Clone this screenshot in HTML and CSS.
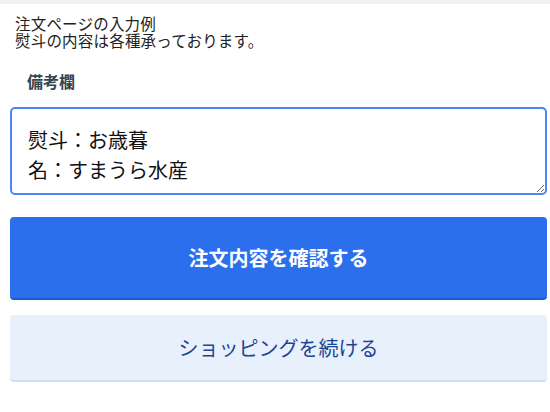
FILE: index.html
```html
<!DOCTYPE html>
<html lang="ja">
<head>
  <meta charset="UTF-8">
  <meta name="viewport" content="width=device-width, initial-scale=1.0">
  <title>備考欄</title>
  <link rel="stylesheet" href="styles.css">
</head>
<body>
  <div class="topbar"></div>

  <div class="content">
    <!-- Note above the form -->
    <div class="note">
      <p>注文ページの入力例</p>
      <p>熨斗の内容は各種承っております。</p>
    </div>

    <!-- Remarks field -->
    <label class="field-label" for="remarks">備考欄</label>
    <textarea class="remarks" id="remarks">熨斗：お歳暮
名：すまうら水産</textarea>

    <!-- Actions -->
    <button class="btn btn-primary">注文内容を確認する</button>
    <button class="btn btn-secondary">ショッピングを続ける</button>
  </div>
</body>
</html>
```

FILE: styles.css
```css
body {
  margin: 0;
  padding: 0;
  font-family: "Noto Sans CJK JP", "Noto Sans", sans-serif;
  background-color: #fff;
  color: #222;
}
.topbar {
  height: 4px;
  background-color: #f1f1f1;
}
.content {
  display: flex;
  flex-direction: column;
  padding: 0 3px 20px 10px;
}
.note {
  margin: 12px 0 0 5px;
  font-family: "Liberation Sans", "Noto Sans CJK JP", sans-serif;
  font-size: 15.5px;
  letter-spacing: 0.2px;
}
.note p {
  margin: 0;
  line-height: 17px;
}
.field-label {
  display: block;
  margin: 21px 0 16px 17px;
  font-size: 16px;
  line-height: 20px;
  font-weight: bold;
  color: #37444d;
}
.remarks {
  box-sizing: border-box;
  width: 100%;
  height: 88px;
  margin: 0;
  padding: 16px 16px 0;
  border: 2px solid #4a86f0;
  border-radius: 5px;
  font-family: inherit;
  font-size: 20px;
  line-height: 30px;
  color: #111;
  outline: none;
}
.btn {
  box-sizing: border-box;
  width: 100%;
  border: none;
  border-radius: 4px;
  font-family: inherit;
  font-size: 20px;
  cursor: pointer;
}
.btn-primary {
  height: 83px;
  margin-top: 22px;
  background-color: #2b6fec;
  border-bottom: 2px solid #1c58cf;
  color: #fff;
  font-weight: bold;
}
.btn-secondary {
  height: 67px;
  margin-top: 15px;
  background-color: #e8f0fc;
  border-bottom: 2px solid #d2dff7;
  color: #1d4594;
}
```
